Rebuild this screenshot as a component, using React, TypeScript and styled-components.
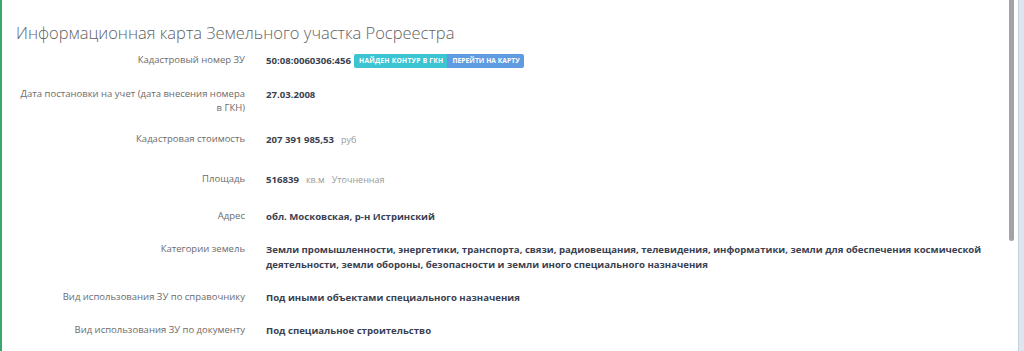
import styled, { createGlobalStyle } from "styled-components";

const GlobalStyle = createGlobalStyle`
  html, body {
    margin: 0;
    padding: 0;
    background: #ffffff;
  }
  body {
    font-family: "Open Sans", "Noto Sans", sans-serif;
  }
`;

const Frame = styled.div`
  display: flex;
  height: 351px;
  overflow: hidden;
  border-left: 2px solid #3aa76d;
`;

const Main = styled.main`
  flex: 1;
  padding: 21px 0 0 14px;
`;

const Title = styled.h2`
  margin: 0 0 8px;
  font-size: 16.5px;
  font-weight: 300;
  line-height: 24px;
  color: #626262;
`;

const InfoTable = styled.div`
  display: flex;
  flex-direction: column;
`;

const Row = styled.div<{ $height: number }>`
  display: grid;
  grid-template-columns: 229px 724px;
  column-gap: 21px;
  min-height: ${(p) => p.$height}px;
  align-items: start;
`;

const Label = styled.div`
  text-align: right;
  font-size: 9.5px;
  line-height: 14px;
  color: #6b6b6b;
`;

const Value = styled.div`
  display: flex;
  align-items: center;
  flex-wrap: wrap;
  font-size: 9.6px;
  line-height: 15px;
  font-weight: 700;
  color: #3a3f51;
`;

const Unit = styled.span`
  margin-left: 7px;
  font-size: 9px;
  font-weight: 400;
  color: #9a9a9a;
`;

const Badges = styled.span`
  display: inline-flex;
  margin-left: 3px;
`;

const Badge = styled.span<{ $tone: "found" | "map" }>`
  display: inline-block;
  padding: 0 4px 0 5px;
  height: 14px;
  line-height: 14px;
  font-size: 6.7px;
  font-weight: 700;
  letter-spacing: ${(p) => (p.$tone === "found" ? "0.25px" : "0.05px")};
  text-transform: uppercase;
  color: #ffffff;
  background: ${(p) => (p.$tone === "found" ? "#3cc4d2" : "#5f9be0")};
  border-radius: ${(p) => (p.$tone === "found" ? "2px 0 0 2px" : "0 2px 2px 0")};
`;

const ScrollTrack = styled.div`
  width: 9px;
  padding-left: 1px;
  background: #ffffff;
`;

const ScrollThumb = styled.div`
  width: 5px;
  height: 241px;
  background: #a3a3a3;
  border-radius: 0 0 3px 3px;
`;

const SideStrip = styled.div`
  width: 5px;
  background: #dfe5ef;
  border-left: 1px solid #c8d0dd;
`;

type Item = {
  label: string;
  height: number;
  value: React.ReactNode;
};

const items: Item[] = [
  {
    label: "Кадастровый номер ЗУ",
    height: 34,
    value: (
      <>
        50:08:0060306:456
        <Badges>
          <Badge $tone="found">Найден контур в ГКН</Badge>
          <Badge $tone="map">Перейти на карту</Badge>
        </Badges>
      </>
    ),
  },
  {
    label: "Дата постановки на учет (дата внесения номера в ГКН)",
    height: 45,
    value: "27.03.2008",
  },
  {
    label: "Кадастровая стоимость",
    height: 40,
    value: (
      <>
        207 391 985,53<Unit>руб</Unit>
      </>
    ),
  },
  {
    label: "Площадь",
    height: 37,
    value: (
      <>
        516839<Unit>кв.м</Unit>
        <Unit>Уточненная</Unit>
      </>
    ),
  },
  { label: "Адрес", height: 33, value: "обл. Московская, р-н Истринский" },
  {
    label: "Категории земель",
    height: 48,
    value:
      "Земли промышленности, энергетики, транспорта, связи, радиовещания, телевидения, информатики, земли для обеспечения космической деятельности, земли обороны, безопасности и земли иного специального назначения",
  },
  {
    label: "Вид использования ЗУ по справочнику",
    height: 33,
    value: "Под иными объектами специального назначения",
  },
  {
    label: "Вид использования ЗУ по документу",
    height: 33,
    value: "Под специальное строительство",
  },
];

export default function App() {
  return (
    <>
      <GlobalStyle />
      <Frame>
        <Main>
          <Title>Информационная карта Земельного участка Росреестра</Title>
          <InfoTable>
            {items.map((it) => (
              <Row key={it.label} $height={it.height}>
                <Label>{it.label}</Label>
                <Value>{it.value}</Value>
              </Row>
            ))}
          </InfoTable>
        </Main>
        <ScrollTrack>
          <ScrollThumb />
        </ScrollTrack>
        <SideStrip />
      </Frame>
    </>
  );
}
